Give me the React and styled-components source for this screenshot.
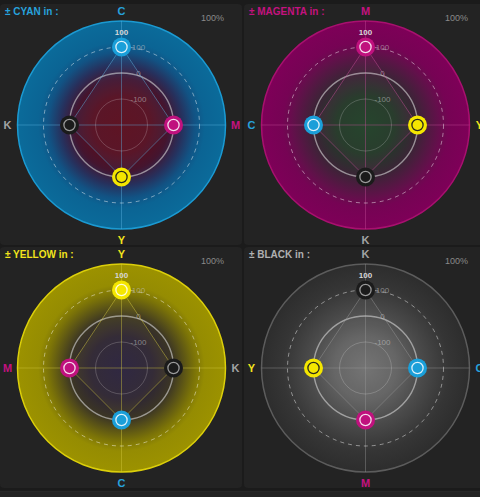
import React from "react";
import styled, { createGlobalStyle } from "styled-components";

const INK = {
  C: "#1a9fd9",
  M: "#c0117e",
  Y: "#f4e600",
  K: "#1b1b1b",
};

const LABEL = {
  C: "#27a2dc",
  M: "#c3127f",
  Y: "#f2e41c",
  K: "#a3a3a3",
};

const PANELS = [
  {
    id: "C",
    name: "CYAN",
    axes: ["C", "M", "Y", "K"],
    rim: "#1b9ad2",
    line: "#5fb8e6",
    stops: [
      [0, "#5e0a18"],
      [0.28, "#5a0c1c"],
      [0.45, "#44152f"],
      [0.58, "#27305c"],
      [0.7, "#125283"],
      [0.8, "#0b6494"],
      [1, "#0b6b9a"],
    ],
  },
  {
    id: "M",
    name: "MAGENTA",
    axes: ["M", "Y", "K", "C"],
    rim: "#a8106f",
    line: "#c94f9c",
    stops: [
      [0, "#1c4427"],
      [0.28, "#1f3c27"],
      [0.5, "#3b2436"],
      [0.7, "#63104b"],
      [0.8, "#760354"],
      [1, "#7e0058"],
    ],
  },
  {
    id: "Y",
    name: "YELLOW",
    axes: ["Y", "K", "C", "M"],
    rim: "#dccf0a",
    line: "#d8cd40",
    stops: [
      [0, "#261e42"],
      [0.3, "#2a2238"],
      [0.5, "#3c3624"],
      [0.7, "#7a7208"],
      [0.8, "#958c02"],
      [1, "#9c9200"],
    ],
  },
  {
    id: "K",
    name: "BLACK",
    axes: ["K", "C", "M", "Y"],
    rim: "#5c5c5c",
    line: "#9a9a9a",
    stops: [
      [0, "#727272"],
      [0.3, "#636363"],
      [0.55, "#4a4a4a"],
      [0.8, "#353535"],
      [1, "#2d2d2d"],
    ],
  },
];

const W = 242;
const H = 241;
const CX = 121.5;
const CY = 121;
const OUTER = 104;

// value -100..100 -> radius 26..78
const radiusOf = (v) => 52 + v * 0.26;

// top, right, bottom, left
const DIRS = [
  [0, -1],
  [1, 0],
  [0, 1],
  [-1, 0],
];

const GlobalStyle = createGlobalStyle`
  html, body {
    margin: 0;
    background: #1b1b1b;
    overflow: hidden;
  }
  body {
    font-family: "Liberation Sans", Arial, sans-serif;
  }
`;

const Page = styled.div`
  width: 480px;
  height: 497px;
  padding-top: 4px;
  box-sizing: border-box;
  overflow: hidden;
`;

const Board = styled.div`
  display: grid;
  grid-template-columns: ${W}px ${W}px;
  grid-auto-rows: ${H}px;
  gap: 2px;
`;

const Panel = styled.section`
  display: grid;
  background: #232323;
  border-radius: 4px;
  overflow: hidden;
  & > * {
    grid-area: 1 / 1;
  }
`;

const Header = styled.header`
  display: flex;
  justify-content: space-between;
  align-items: flex-start;
  padding: 2px 18px 0 5px;
  pointer-events: none;
  z-index: 1;
`;

const Title = styled.span`
  font-size: 10px;
  font-weight: 700;
  line-height: 12px;
  color: ${(p) => p.$color};
`;

const Percent = styled.span`
  margin-top: 6px;
  font-size: 9px;
  line-height: 12px;
  color: #8a8a8a;
`;

const Chart = styled.svg`
  display: block;
  width: ${W}px;
  height: ${H}px;
  font-family: "Liberation Sans", Arial, sans-serif;
`;

const Footer = styled.div`
  margin-top: 3px;
  height: 20px;
  background: #222;
  border-top: 1px solid #262626;
`;

const Handle = ({ x, y, ink, active }) => {
  let ring = "rgba(255,255,255,0.85)";
  if (ink === "K") ring = "#9a9a9a";
  else if (ink === "Y" && !active) ring = "#2a2a1a";
  return (
    <g>
      <circle cx={x} cy={y} r={9.5} fill={INK[ink]} />
      <circle cx={x} cy={y} r={5.6} fill={INK[ink]} stroke={ring} strokeWidth={1.3} />
    </g>
  );
};

const Wheel = ({ panel }) => {
  const gid = `grad-${panel.id}`;
  const pts = panel.axes.map((a, i) => {
    const v = i === 0 ? 100 : 0;
    const r = radiusOf(v);
    return { a, x: CX + DIRS[i][0] * r, y: CY + DIRS[i][1] * r, active: i === 0 };
  });
  const poly = pts.map((p) => `${p.x},${p.y}`).join(" ");

  return (
    <Chart viewBox={`0 0 ${W} ${H}`}>
      <defs>
        <radialGradient id={gid} cx={CX} cy={CY} r={OUTER} gradientUnits="userSpaceOnUse">
          {panel.stops.map(([o, c]) => (
            <stop key={o} offset={o} stopColor={c} />
          ))}
        </radialGradient>
      </defs>

      <circle cx={CX} cy={CY} r={OUTER} fill={`url(#${gid})`} stroke={panel.rim} strokeWidth={1.5} />

      <g stroke={panel.line} strokeOpacity={0.45} strokeWidth={0.9}>
        <line x1={CX} y1={CY - OUTER} x2={CX} y2={CY + OUTER} />
        <line x1={CX - OUTER} y1={CY} x2={CX + OUTER} y2={CY} />
      </g>

      <circle cx={CX} cy={CY} r={78} fill="none" stroke="rgba(255,255,255,0.45)" strokeWidth={1} strokeDasharray="4 4" />
      <circle cx={CX} cy={CY} r={52} fill="none" stroke="rgba(215,215,215,0.6)" strokeWidth={1.4} />
      <circle cx={CX} cy={CY} r={26} fill="none" stroke="rgba(255,255,255,0.2)" strokeWidth={1} />

      <polygon points={poly} fill={panel.line} fillOpacity={0.06} stroke={panel.line} strokeOpacity={0.5} strokeWidth={0.9} />

      <g fontSize="8" fill="rgba(205,205,205,0.55)" textAnchor="middle" dominantBaseline="central">
        <text x={CX + 17} y={CY - 78}>100</text>
        <text x={CX + 17} y={CY - 52}>0</text>
        <text x={CX + 17} y={CY - 26}>-100</text>
      </g>

      <text x={CX} y={CY - 93} fontSize="8" fontWeight="700" fill="#d8d8d8" textAnchor="middle" dominantBaseline="central">
        100
      </text>

      {pts.map((p) => (
        <Handle key={p.a} x={p.x} y={p.y} ink={p.a} active={p.active} />
      ))}

      <g fontSize="11" fontWeight="700" textAnchor="middle" dominantBaseline="central">
        {panel.axes.map((a, i) => (
          <text key={a} x={CX + DIRS[i][0] * 114} y={CY + DIRS[i][1] * 114.5} fill={LABEL[a]}>
            {a}
          </text>
        ))}
      </g>
    </Chart>
  );
};

const App = () => {
  return (
    <Page>
      <GlobalStyle />
      <Board>
        {PANELS.map((panel) => (
          <Panel key={panel.id}>
            <Wheel panel={panel} />
            <Header>
              <Title $color={panel.id === "K" ? "#b0b0b0" : LABEL[panel.id]}>± {panel.name} in :</Title>
              <Percent>100%</Percent>
            </Header>
          </Panel>
        ))}
      </Board>
      <Footer />
    </Page>
  );
};

export default App;
